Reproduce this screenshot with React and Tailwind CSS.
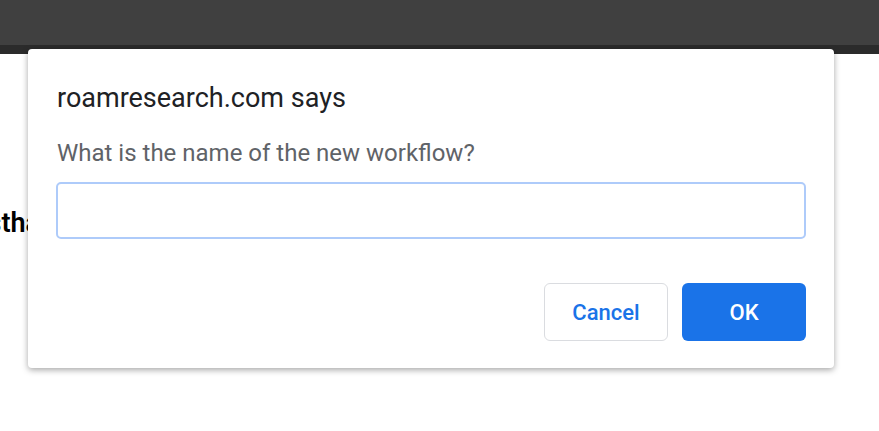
export default function App() {
  return (
    <div className="relative h-[431px] w-full overflow-hidden bg-white font-['Roboto',sans-serif]">
      <div className="h-[45px] bg-[#404040]" />
      <div className="h-[9px] bg-[#2b2b2b]" />
      <div className="mt-[153px] -ml-[44px] whitespace-nowrap text-[27px] font-semibold leading-[32px] text-black">
        Firsthand notes
      </div>

      <div className="absolute left-[28px] top-[49px] flex h-[319px] w-[806px] flex-col rounded-[4px] bg-white pl-[29px] pr-[28px] pt-[34px] shadow-[0_2px_6px_rgba(0,0,0,0.35)]">
        <div className="text-[27px] leading-[30px] text-[#202124]">roamresearch.com says</div>
        <div className="mt-[26px] text-[24px] leading-[28px] text-[#5f6368]">
          What is the name of the new workflow?
        </div>
        <input
          className="-ml-px mt-[15px] h-[57px] w-[750px] rounded-[5px] border-2 border-[#aecbfa] px-3 text-[20px] outline-none"
          type="text"
        />
        <div className="mt-[44px] flex justify-end gap-[14px]">
          <button className="h-[58px] w-[124px] rounded-[6px] border border-[#dadce0] bg-white text-[22px] font-medium text-[#1a73e8]">
            Cancel
          </button>
          <button className="h-[58px] w-[124px] rounded-[6px] bg-[#1a73e8] text-[22px] font-medium text-white">
            OK
          </button>
        </div>
      </div>
    </div>
  );
}
